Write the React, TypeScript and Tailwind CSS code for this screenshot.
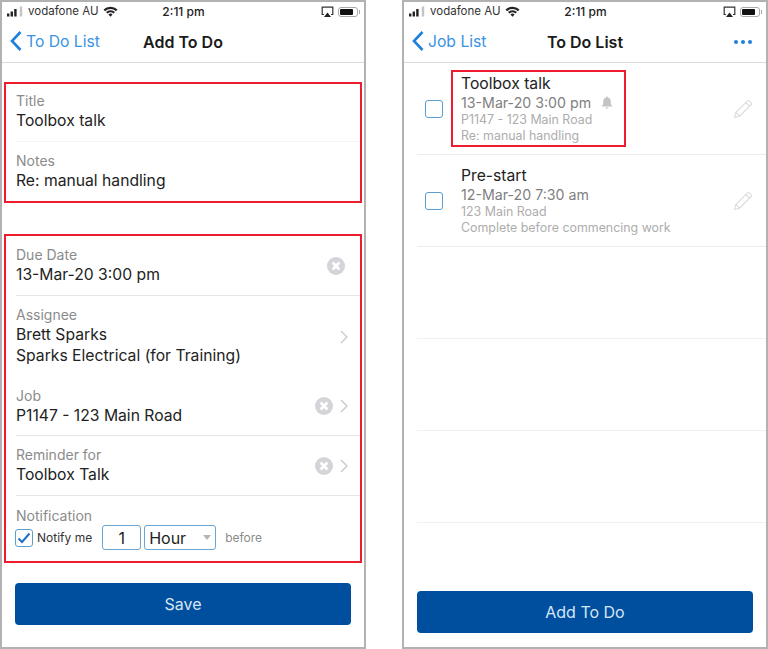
const font = "font-['Inter','Liberation_Sans',sans-serif]";

function StatusBar() {
  return (
    <div className="grid h-[19px] shrink-0 grid-cols-[1fr_auto_1fr] items-center pl-[5px] pr-[4px] text-[11.5px] text-[#333]">
      <div className="flex items-center">
        <svg width="16" height="11" viewBox="0 0 16 11" className="shrink-0">
          <rect x="0" y="7.5" width="2.4" height="3" fill="#222" />
          <rect x="3.6" y="5.5" width="2.4" height="5" fill="#222" />
          <rect x="7.2" y="3" width="2.4" height="7.5" fill="#222" />
          <rect x="12.8" y="0.5" width="2.4" height="10" fill="#c4c4c4" />
        </svg>
        <span className="ml-[5px]">vodafone AU</span>
        <svg width="15" height="11" viewBox="0 0 15 11" className="ml-[5px] shrink-0">
          <path d="M0.5 3.6 A10 10 0 0 1 14.5 3.6 L13 5.2 A8 8 0 0 0 2 5.2 Z" fill="#222" />
          <path d="M3 6.1 A6.4 6.4 0 0 1 12 6.1 L10.5 7.6 A4.3 4.3 0 0 0 4.5 7.6 Z" fill="#222" />
          <path d="M5.4 8.5 A3 3 0 0 1 9.6 8.5 L7.5 10.7 Z" fill="#222" />
        </svg>
      </div>
      <span className="text-[12px] font-medium text-[#222]">2:11 pm</span>
      <div className="flex items-center justify-end gap-[4px]">
        <svg width="13" height="12" viewBox="0 0 13 12">
          <path d="M3 8.5H1.2V1.2H11.8V8.5H10" fill="none" stroke="#333" strokeWidth="1.2" />
          <path d="M6.5 6.5L10 11H3Z" fill="#222" />
        </svg>
        <div className="flex items-center">
          <div className="flex h-[10px] w-[20px] items-center rounded-[3px] border border-[#aaa] p-[1px]">
            <div className="h-full w-[13px] rounded-[1px] bg-[#111]" />
          </div>
          <div className="ml-[1px] h-[4px] w-[1px] bg-[#aaa]" />
        </div>
      </div>
    </div>
  );
}

function NavBar({ back, title, dots }: { back: string; title: string; dots?: boolean }) {
  return (
    <div className="grid h-[42px] shrink-0 grid-cols-[1fr_auto_1fr] items-center border-b border-[#d9d9d9] px-[7px]">
      <div className="flex items-center">
        <svg width="14" height="22" viewBox="0 0 14 22" className="shrink-0">
          <path d="M11.5 2L3 11l8.5 9" fill="none" stroke="#1f80dc" strokeWidth="2.6" />
        </svg>
        <span className="ml-[3px] text-[15.7px] text-[#3a93e4]">{back}</span>
      </div>
      <span className="text-[16px] font-semibold text-[#1a1a1a]">{title}</span>
      {dots ? (
        <div className="mr-[7px] flex justify-end gap-[3px]">
          <div className="h-[4px] w-[4px] rounded-full bg-[#1f80dc]" />
          <div className="h-[4px] w-[4px] rounded-full bg-[#1f80dc]" />
          <div className="h-[4px] w-[4px] rounded-full bg-[#1f80dc]" />
        </div>
      ) : (
        <div />
      )}
    </div>
  );
}

function ClearIcon() {
  return (
    <svg width="18" height="18" viewBox="0 0 18 18" className="shrink-0">
      <circle cx="9" cy="9" r="9" fill="#d4d4d9" />
      <path d="M5.6 5.6l6.8 6.8M12.4 5.6l-6.8 6.8" stroke="#fff" strokeWidth="2.8" />
    </svg>
  );
}

function Chevron() {
  return (
    <svg width="8" height="14" viewBox="0 0 8 14" className="shrink-0">
      <path d="M1 1l6 6-6 6" fill="none" stroke="#c9c9ce" strokeWidth="1.4" />
    </svg>
  );
}

function Field({
  label,
  lines,
  clear,
  chevron,
  rowClass,
}: {
  label: string;
  lines: string[];
  clear?: boolean;
  chevron?: boolean;
  rowClass: string;
}) {
  return (
    <div className={`ml-[10px] flex pr-[12px] ${rowClass}`}>
      <div className="flex-1">
        <div className="text-[14px] leading-[20px] text-[#8b8b8b]">{label}</div>
        {lines.map((line) => (
          <div key={line} className="text-[15.7px] leading-[20.5px] text-[#222]">
            {line}
          </div>
        ))}
      </div>
      <div className={`-mt-[9px] flex items-center gap-[7px] ${chevron ? "" : "mr-[3px]"}`}>
        {clear && <ClearIcon />}
        {chevron && <Chevron />}
      </div>
    </div>
  );
}

function AddToDo() {
  return (
    <div className="flex h-[649px] w-[366px] shrink-0 flex-col border-2 border-[#b2b2b2] bg-white">
      <StatusBar />
      <NavBar back="To Do List" title="Add To Do" />
      <div className="mx-[2px] mt-[19px] h-[121px] border-2 border-[#ee1c2e]">
        <Field label="Title" lines={["Toolbox talk"]} rowClass="h-[58px] pt-[7px] border-b border-[#f4f4f4]" />
        <Field label="Notes" lines={["Re: manual handling"]} rowClass="h-[59px] pt-[9px]" />
      </div>
      <div className="mx-[2px] mt-[31px] h-[329px] border-2 border-[#ee1c2e]">
        <Field label="Due Date" lines={["13-Mar-20 3:00 pm"]} clear rowClass="h-[60px] pt-[9px] border-b border-[#e6e6e6]" />
        <Field label="Assignee" lines={["Brett Sparks", "Sparks Electrical (for Training)"]} chevron rowClass="h-[81px] pt-[9px]" />
        <Field label="Job" lines={["P1147 - 123 Main Road"]} clear chevron rowClass="h-[59px] pt-[9px] border-b border-[#e6e6e6]" />
        <Field label="Reminder for" lines={["Toolbox Talk"]} clear chevron rowClass="h-[60px] pt-[9px] border-b border-[#e6e6e6]" />
        <div className="ml-[10px] pt-[10px]">
          <div className="text-[14px] leading-[19px] text-[#8b8b8b]">Notification</div>
          <div className="flex items-center">
            <div className="-ml-[1px] flex h-[18px] w-[18px] items-center justify-center rounded-[3px] border border-[#5a9fd0]">
              <svg width="14" height="12" viewBox="0 0 14 12">
                <path d="M1.5 6.5l3.5 3.5 7.5-8.5" fill="none" stroke="#1f6fc4" strokeWidth="2" />
              </svg>
            </div>
            <span className="ml-[4px] text-[12px] text-[#333]">Notify me</span>
            <div className="ml-[10px] flex h-[25px] w-[39px] items-center justify-center rounded-[3px] border border-[#6aa5d3] text-[16px] text-[#222]">
              1
            </div>
            <div className="ml-[3px] flex h-[25px] w-[72px] items-center justify-between rounded-[3px] border border-[#6aa5d3] pl-[4px] pr-[4px] text-[16px] text-[#222]">
              Hour
              <div className="h-0 w-0 border-x-[4px] border-t-[5px] border-x-transparent border-t-[#b5b5b5]" />
            </div>
            <span className="ml-[9px] text-[12px] text-[#8b8b8b]">before</span>
          </div>
        </div>
      </div>
      <div className="mx-[13px] mt-[20px] flex h-[42px] items-center justify-center rounded-[4px] bg-[#004f9f] text-[16px] text-[#d6e6f5]">
        Save
      </div>
    </div>
  );
}

function Pencil() {
  return (
    <svg width="20" height="20" viewBox="0 0 20 20" className="shrink-0">
      <path d="M1.5 18.5l1.3-5L14.5 1.8a1.2 1.2 0 0 1 1.7 0l2 2a1.2 1.2 0 0 1 0 1.7L6.5 17.2zM2.8 13.5l3.7 3.7M12.8 3.5l3.7 3.7" fill="none" stroke="#dcdcdc" strokeWidth="1.1" />
    </svg>
  );
}

function Checkbox() {
  return <div className="ml-[8px] h-[18px] w-[18px] shrink-0 rounded-[3px] border-[1.5px] border-[#5a9fd0]" />;
}

function TodoText({
  title,
  date,
  job,
  note,
  bell,
}: {
  title: string;
  date: string;
  job: string;
  note: string;
  bell?: boolean;
}) {
  return (
    <>
      <div className="pt-[2px] text-[15.7px] leading-[18px] text-[#222]">{title}</div>
      <div className="flex items-center text-[14.2px] leading-[19px] text-[#7f7f7f]">
        {date}
        {bell && (
          <svg width="12" height="13" viewBox="0 0 11 12" className="ml-[10px]">
            <path d="M5.5 0.5c-.6 0-.9.4-.9.9C3 1.8 2 3.2 2 5v2.5L.7 9.2v.6h9.6v-.6L9 7.5V5c0-1.8-1-3.2-2.6-3.6 0-.5-.3-.9-.9-.9zM4.2 10.5a1.3 1.3 0 0 0 2.6 0z" fill="#c4c4c4" />
          </svg>
        )}
      </div>
      <div className="text-[12.4px] leading-[16px] text-[#adadad]">{job}</div>
      <div className="text-[12.4px] leading-[16px] text-[#adadad]">{note}</div>
    </>
  );
}

function ToDoList() {
  return (
    <div className="relative ml-[36px] flex h-[649px] w-[366px] shrink-0 flex-col border-2 border-[#b2b2b2] bg-white">
      <StatusBar />
      <NavBar back="Job List" title="To Do List" dots />
      <div className="ml-[13px] flex h-[92px] items-center border-b border-[#ececec] pr-[13px]">
        <Checkbox />
        <div className="ml-[8px] w-[175px] border-2 border-[#ee1c2e] pb-[1px] pl-[8px] pt-[1px]">
          <TodoText title="Toolbox talk" date="13-Mar-20 3:00 pm" job="P1147 - 123 Main Road" note="Re: manual handling" bell />
        </div>
        <div className="ml-auto">
          <Pencil />
        </div>
      </div>
      <div className="ml-[13px] flex h-[92px] items-center border-b border-[#ececec] pr-[13px]">
        <Checkbox />
        <div className="ml-[18px]">
          <TodoText title="Pre-start" date="12-Mar-20 7:30 am" job="123 Main Road" note="Complete before commencing work" />
        </div>
        <div className="ml-auto">
          <Pencil />
        </div>
      </div>
      <div className="ml-[13px] h-[92px] border-b border-[#f1f1f1]" />
      <div className="ml-[13px] h-[92px] border-b border-[#f1f1f1]" />
      <div className="ml-[13px] h-[92px] border-b border-[#f1f1f1]" />
      <div className="absolute bottom-[14px] left-[13px] flex h-[42px] w-[336px] items-center justify-center rounded-[4px] bg-[#004f9f] text-[16px] text-[#d6e6f5]">
        Add To Do
      </div>
    </div>
  );
}

export default function App() {
  return (
    <div className={`flex h-[649px] w-[768px] overflow-hidden bg-white ${font}`}>
      <AddToDo />
      <ToDoList />
    </div>
  );
}
